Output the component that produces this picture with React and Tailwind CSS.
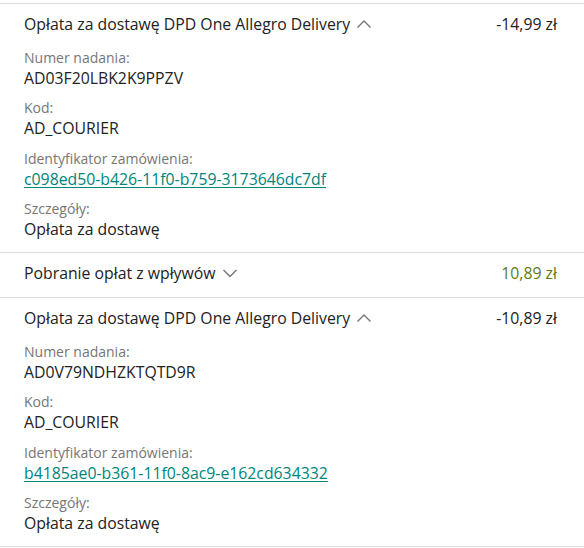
import { useState } from "react";

const rows = [
  {
    title: "Opłata za dostawę DPD One Allegro Delivery",
    amount: "-14,99 zł",
    positive: false,
    open: true,
    fields: [
      { label: "Numer nadania:", value: "AD03F20LBK2K9PPZV" },
      { label: "Kod:", value: "AD_COURIER" },
      { label: "Identyfikator zamówienia:", value: "c098ed50-b426-11f0-b759-3173646dc7df", link: true },
      { label: "Szczegóły:", value: "Opłata za dostawę" },
    ],
  },
  {
    title: "Pobranie opłat z wpływów",
    amount: "10,89 zł",
    positive: true,
    open: false,
    fields: [],
  },
  {
    title: "Opłata za dostawę DPD One Allegro Delivery",
    amount: "-10,89 zł",
    positive: false,
    open: true,
    fields: [
      { label: "Numer nadania:", value: "AD0V79NDHZKTQTD9R" },
      { label: "Kod:", value: "AD_COURIER" },
      { label: "Identyfikator zamówienia:", value: "b4185ae0-b361-11f0-8ac9-e162cd634332", link: true },
      { label: "Szczegóły:", value: "Opłata za dostawę" },
    ],
  },
];

function Chevron({ up }) {
  return (
    <svg width="16" height="10" viewBox="0 0 16 10" className="ml-[6px] shrink-0">
      <path
        d={up ? "M1.5 8.5 L8 2 L14.5 8.5" : "M1.5 2 L8 8.5 L14.5 2"}
        fill="none"
        stroke="#767676"
        strokeWidth="1.4"
      />
    </svg>
  );
}

function Row({ row }) {
  const [open, setOpen] = useState(row.open);
  return (
    <div className="border-b border-[#dcdcdc] pl-6 pr-[27px] pt-[8px] pb-[12px]">
      <div className="flex items-center justify-between">
        <button
          type="button"
          onClick={() => setOpen(!open)}
          className="flex items-center text-[15.8px] leading-6 text-[#222]"
        >
          {row.title}
          <Chevron up={open} />
        </button>
        <span className={`text-[15.8px] leading-6 ${row.positive ? "text-[#5e7d0f]" : "text-[#222]"}`}>
          {row.amount}
        </span>
      </div>
      {open && row.fields.length > 0 && (
        <div className="mt-[12.5px] flex flex-col gap-[10.5px]">
          {row.fields.map((f) => (
            <div key={f.label} className="flex flex-col">
              <span className="text-[14px] leading-[18px] text-[#767676]">{f.label}</span>
              {f.link ? (
                <a href="#" className="text-[15.8px] leading-[22px] text-[#00857a] underline underline-offset-2">
                  {f.value}
                </a>
              ) : (
                <span className="text-[15.8px] leading-[22px] text-[#222]">{f.value}</span>
              )}
            </div>
          ))}
        </div>
      )}
    </div>
  );
}

export default function App() {
  return (
    <div className="w-[584px] bg-white font-['Open_Sans',sans-serif] pt-[3px]">
      <div className="border-t border-[#dcdcdc]">
        {rows.map((r, i) => (
          <Row key={i} row={r} />
        ))}
      </div>
    </div>
  );
}
